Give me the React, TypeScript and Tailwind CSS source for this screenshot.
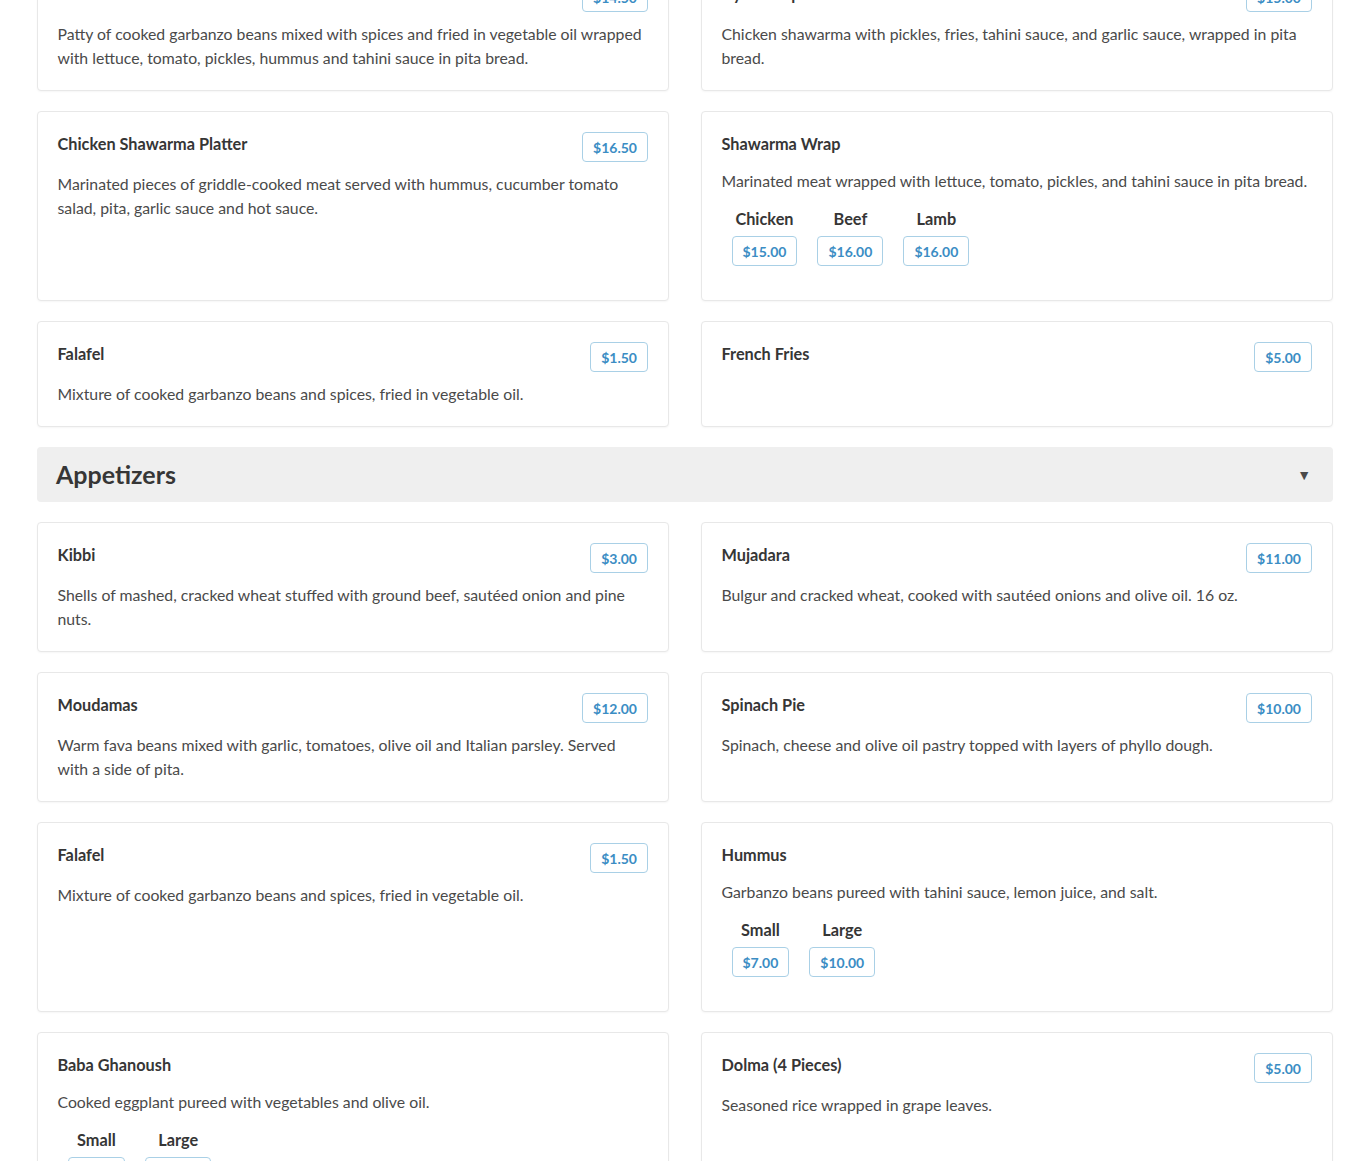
import React from 'react';

type Variant = { label: string; price: string };
type Item = { name: string; price?: string; desc: string; variants?: Variant[] };

const sandwiches: Item[] = [
  {
    name: 'Falafel Sandwich',
    price: '$14.50',
    desc: 'Patty of cooked garbanzo beans mixed with spices and fried in vegetable oil wrapped with lettuce, tomato, pickles, hummus and tahini sauce in pita bread.',
  },
  {
    name: 'Gyro Wrap',
    price: '$15.00',
    desc: 'Chicken shawarma with pickles, fries, tahini sauce, and garlic sauce, wrapped in pita bread.',
  },
  {
    name: 'Chicken Shawarma Platter',
    price: '$16.50',
    desc: 'Marinated pieces of griddle-cooked meat served with hummus, cucumber tomato salad, pita, garlic sauce and hot sauce.',
  },
  {
    name: 'Shawarma Wrap',
    desc: 'Marinated meat wrapped with lettuce, tomato, pickles, and tahini sauce in pita bread.',
    variants: [
      { label: 'Chicken', price: '$15.00' },
      { label: 'Beef', price: '$16.00' },
      { label: 'Lamb', price: '$16.00' },
    ],
  },
  {
    name: 'Falafel',
    price: '$1.50',
    desc: 'Mixture of cooked garbanzo beans and spices, fried in vegetable oil.',
  },
  { name: 'French Fries', price: '$5.00', desc: '' },
];

const appetizers: Item[] = [
  {
    name: 'Kibbi',
    price: '$3.00',
    desc: 'Shells of mashed, cracked wheat stuffed with ground beef, sautéed onion and pine nuts.',
  },
  {
    name: 'Mujadara',
    price: '$11.00',
    desc: 'Bulgur and cracked wheat, cooked with sautéed onions and olive oil. 16 oz.',
  },
  {
    name: 'Moudamas',
    price: '$12.00',
    desc: 'Warm fava beans mixed with garlic, tomatoes, olive oil and Italian parsley. Served with a side of pita.',
  },
  {
    name: 'Spinach Pie',
    price: '$10.00',
    desc: 'Spinach, cheese and olive oil pastry topped with layers of phyllo dough.',
  },
  {
    name: 'Falafel',
    price: '$1.50',
    desc: 'Mixture of cooked garbanzo beans and spices, fried in vegetable oil.',
  },
  {
    name: 'Hummus',
    desc: 'Garbanzo beans pureed with tahini sauce, lemon juice, and salt.',
    variants: [
      { label: 'Small', price: '$7.00' },
      { label: 'Large', price: '$10.00' },
    ],
  },
  {
    name: 'Baba Ghanoush',
    desc: 'Cooked eggplant pureed with vegetables and olive oil.',
    variants: [
      { label: 'Small', price: '$7.00' },
      { label: 'Large', price: '$10.00' },
    ],
  },
  {
    name: 'Dolma (4 Pieces)',
    price: '$5.00',
    desc: 'Seasoned rice wrapped in grape leaves.',
  },
];

function Price({ value }: { value: string }) {
  return (
    <span className="inline-flex h-[30px] items-center rounded-[4px] border border-[#a9d0e6] bg-white px-[10px] text-[14px] font-bold text-[#3b8dc4]">
      {value}
    </span>
  );
}

function MenuCard({ item }: { item: Item }) {
  return (
    <div className="rounded-[4px] border border-[#e8e8e8] bg-white py-5 pl-[19.5px] pr-5 shadow-[0_1px_2px_rgba(0,0,0,0.04)]">
      <div className="flex items-start justify-between">
        <h3 className="text-[16.3px] font-bold leading-6 text-[#363636]">{item.name}</h3>
        {item.price && <Price value={item.price} />}
      </div>
      {item.desc && (
        <p className={`text-[15.8px] leading-6 text-[#4a4a4a] ${item.price ? 'mt-[10px]' : 'mt-[13px]'}`}>{item.desc}</p>
      )}
      {item.variants && (
        <div className="mb-[14px] mt-[14px] flex">
          {item.variants.map((v) => (
            <div key={v.label} className="mx-[10px] flex flex-col items-center">
              <span className="text-[16.3px] font-bold leading-6 text-[#363636]">{v.label}</span>
              <div className="mt-[5px]">
                <Price value={v.price} />
              </div>
            </div>
          ))}
        </div>
      )}
    </div>
  );
}

export default function App() {
  return (
    <div className="min-h-screen bg-white font-['Lato','Liberation_Sans',sans-serif]">
      <div className="mt-[-39px] px-[37px] pb-10">
        <div className="grid grid-cols-2 gap-x-8 gap-y-5">
          {sandwiches.map((item, i) => (
            <MenuCard key={i} item={item} />
          ))}
        </div>

        {/* Appetizers section */}
        <div className="my-5 flex h-[55px] items-center justify-between rounded-[4px] bg-[#efefef] pl-[19px] pr-[22px]">
          <h2 className="text-[25px] font-bold text-[#363636]">Appetizers</h2>
          <span className="text-[14px] text-[#4a4a4a]">▼</span>
        </div>

        <div className="grid grid-cols-2 gap-x-8 gap-y-5">
          {appetizers.map((item, i) => (
            <MenuCard key={i} item={item} />
          ))}
        </div>
      </div>
    </div>
  );
}
